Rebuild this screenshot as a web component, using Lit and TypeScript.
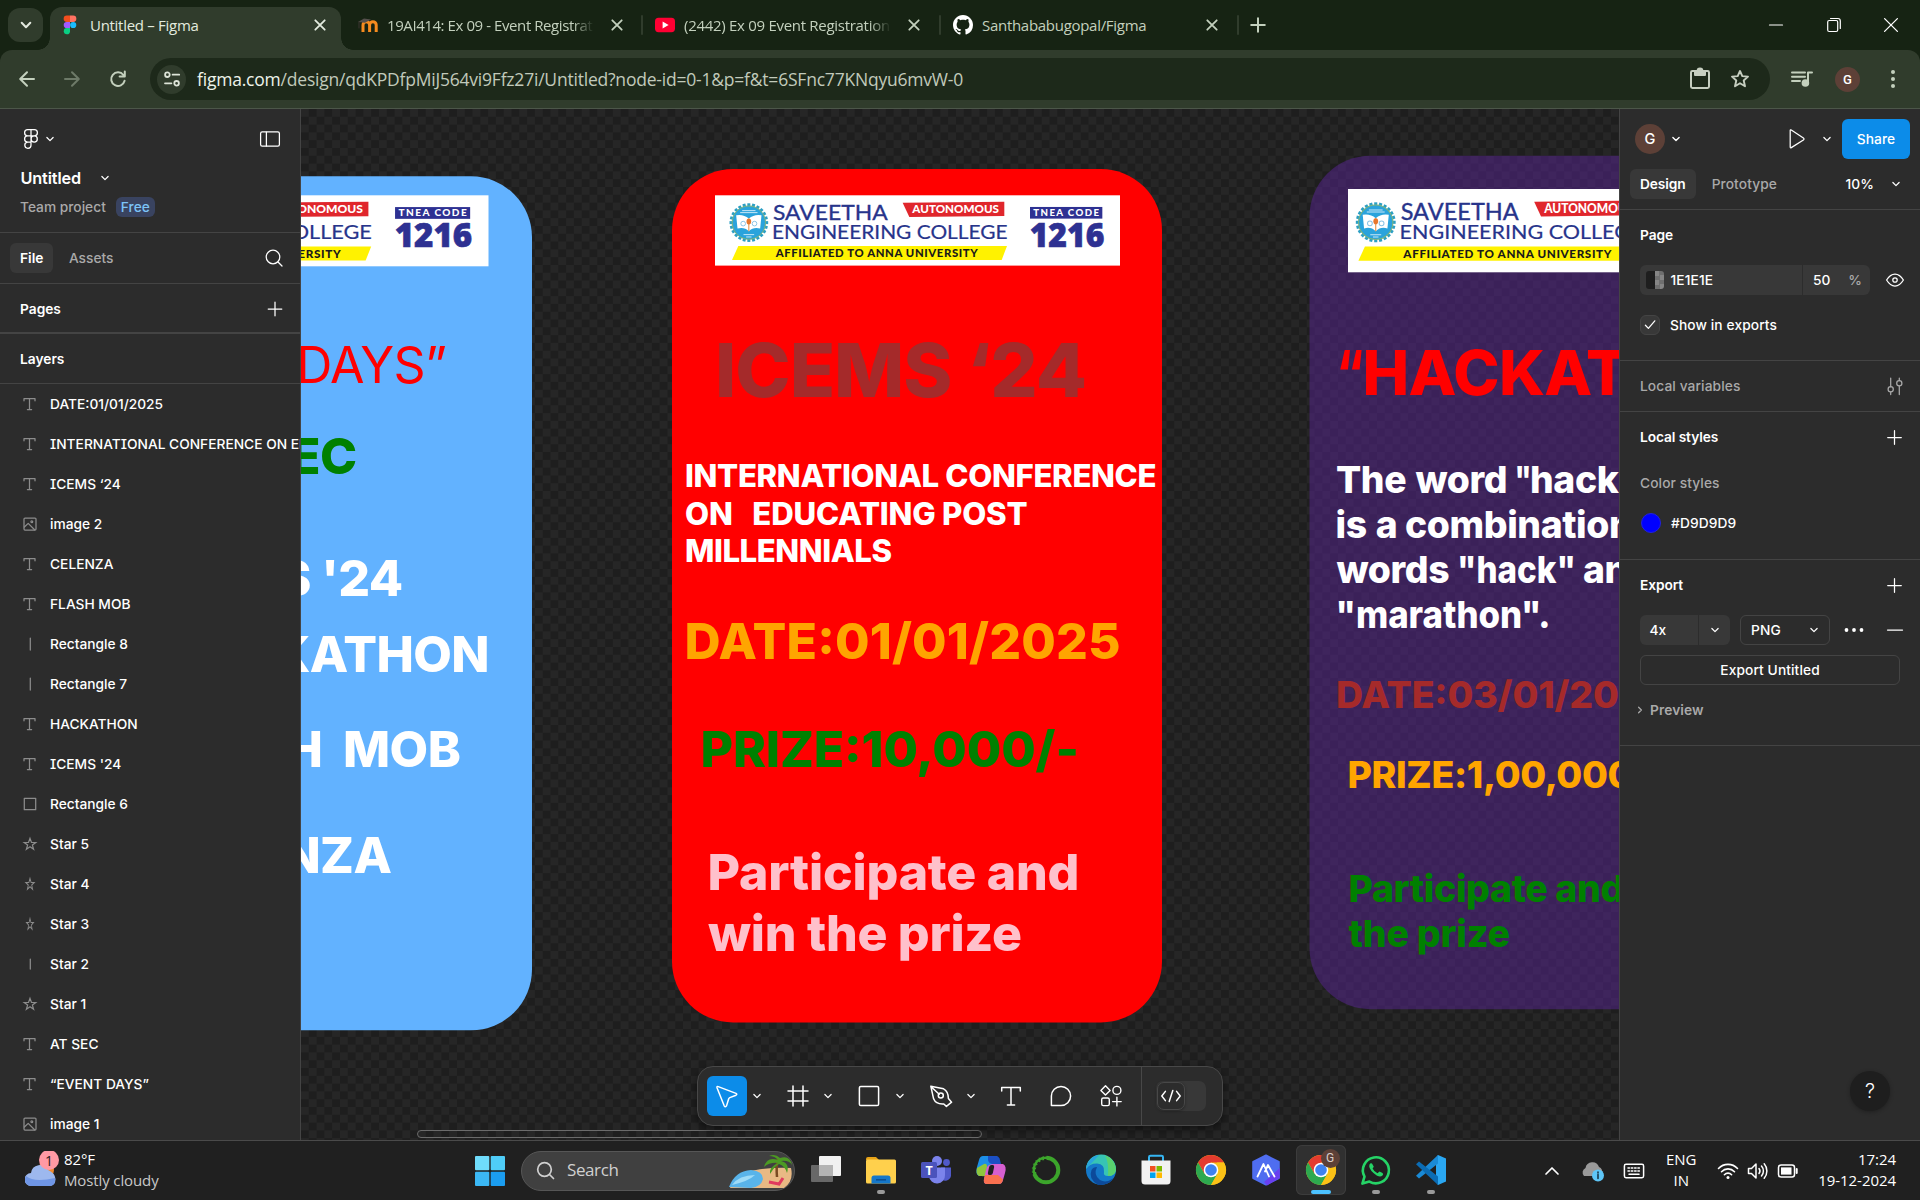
import { LitElement, html, svg, css, type SVGTemplateResult } from "lit";
import { customElement, property } from "lit/decorators.js";

type Layer = { kind: string; name: string };

const layers: Layer[] = [
  { kind: "text", name: "DATE:01/01/2025" },
  { kind: "text", name: "INTERNATIONAL CONFERENCE ON EDUCATING POST MILLENNIALS" },
  { kind: "text", name: "ICEMS ‘24" },
  { kind: "image", name: "image 2" },
  { kind: "text", name: "CELENZA" },
  { kind: "text", name: "FLASH MOB" },
  { kind: "line", name: "Rectangle 8" },
  { kind: "line", name: "Rectangle 7" },
  { kind: "text", name: "HACKATHON" },
  { kind: "text", name: "ICEMS '24" },
  { kind: "rect", name: "Rectangle 6" },
  { kind: "star", name: "Star 5" },
  { kind: "starSlim", name: "Star 4" },
  { kind: "starThin", name: "Star 3" },
  { kind: "lineShort", name: "Star 2" },
  { kind: "star", name: "Star 1" },
  { kind: "text", name: "AT SEC" },
  { kind: "text", name: "“EVENT DAYS”" },
  { kind: "image", name: "image 1" },
];

/* Every glyph is drawn centred on the origin, in CSS pixels. */
const chromeBall = svg`
  <circle r="15" fill="#fbc116"/>
  <path d="M-13 -7.5A15 15 0 0 1 13 -7.5L0 -7.5L-6.5 3.7Z" fill="#e33b2e"/>
  <path d="M-13 -7.5A15 15 0 0 0 0 15L6.5 3.7L-6.5 3.7Z" fill="#2da94f"/>
  <path d="M13 -7.5A15 15 0 0 1 0 15L6.5 3.7L6 -7.5Z" fill="#fbc116"/>
  <circle r="7.3" fill="#fff"/><circle r="5.8" fill="#3f82f0"/>`;

const star = (sx: number) => svg`<path transform="scale(${sx} 1)" d="M0 -5.6L1.5 -1.6L5.8 -1.5L2.4 1.1L3.6 5.2L0 2.8L-3.6 5.2L-2.4 1.1L-5.8 -1.5L-1.5 -1.6Z" stroke-linejoin="miter"/>`;

const glyphs: Record<string, SVGTemplateResult> = {
  chevron: svg`<path d="M-3.1 -1.5L0 1.6L3.1 -1.5"/>`,
  plus: svg`<path d="M-6.8 0H6.8M0 -6.8V6.8"/>`,
  minus: svg`<path d="M-7.5 0H7.5"/>`,
  close: svg`<path d="M-4.7 -4.7L4.7 4.7M4.7 -4.7L-4.7 4.7"/>`,
  text: svg`<path d="M-6 -3.2V-5.5H5V-3.2M-.5 -5.5V5.5M-2.6 5.5H1.6"/>`,
  image: svg`<rect x="-6" y="-6" width="12" height="12" rx="1"/><circle cx="1.8" cy="-2.3" r=".9"/><path d="M-5.6 3L-1.8 -.6L4.6 5.8"/>`,
  line: svg`<path d="M.3 -6V6"/>`,
  lineShort: svg`<path d="M.3 -5V5"/>`,
  rect: svg`<rect x="-5.7" y="-5.7" width="11.4" height="11.4"/>`,
  star: star(1),
  starSlim: star(0.72),
  starThin: star(0.6),
  figma: svg`<path d="M0 -9.3H-3.3A3.1 3.1 0 0 0 -3.3 -3.1H0ZM0 -9.3H3.3A3.1 3.1 0 0 1 3.3 -3.1H0ZM0 -3.1H-3.3A3.1 3.1 0 0 0 -3.3 3.1H0ZM3.2 -3.1A3.1 3.1 0 1 1 3.2 3.1A3.1 3.1 0 1 1 3.2 -3.1M0 3.1H-3.3A3.1 3.1 0 1 0 0 6.2Z"/>`,
  panel: svg`<rect x="-9.4" y="-7.1" width="18.8" height="14.2" rx="1.6"/><path d="M-3.6 -7V7"/>`,
  search: svg`<circle cx="-1" cy="-1" r="6.8"/><path d="M4 4L8 8"/>`,
  play: svg`<path d="M-6.8 -8.4Q-6.8 -9.6 -5.7 -9L6.4 -1Q7.6 0 6.4 1L-5.7 8.6Q-6.8 9.2 -6.8 8Z"/>`,
  eye: svg`<path d="M-8.4 0Q-4.8 -6 0 -6T8.4 0Q4.8 6 0 6T-8.4 0Z"/><circle r="2.2"/>`,
  check: svg`<path d="M-4.6 .2L-1.6 3.4L4.8 -4.2"/>`,
  sliders: svg`<path d="M-4.3 -8V.8M-4.3 6V8.5M4.3 8.5V0M4.3 -5.5V-8"/><circle cx="-4.3" cy="3.3" r="2.6"/><circle cx="4.3" cy="-2.8" r="2.6"/>`,
  dots: svg`<g fill="currentColor" stroke="none"><circle cx="-7.5" r="1.9"/><circle r="1.9"/><circle cx="7.5" r="1.9"/></g>`,
  cursor: svg`<path d="M-10 -8.3Q-10.3 -9.8 -8.8 -9.4L9 -2.6Q10.6 -1.6 9 -.8L2.8 1.6Q2 2 1.7 2.8L-.4 9.6Q-1.6 11.6 -2.8 9.8Z"/>`,
  frame: svg`<path d="M-5 -10V10M5 -10V10M-10 -5H10M-10 5H10"/>`,
  square: svg`<rect x="-9.6" y="-9.6" width="19.2" height="19.2" rx="1.4"/>`,
  pen: svg`<path d="M-10.2 -9.8L2.6 -7.2Q7.4 -4.6 7.4 2.4L10.6 6.2L5.4 10.4L2.8 8Q-5 8.6 -7.4 2.8ZM-9.6 -9L-1.8 -1.8"/><circle cx="-.2" cy="-.4" r="2.5"/>`,
  type: svg`<path d="M-9.3 -5V-8.6H9.3V-5M0 -8.6V9M-3.6 9H3.6"/>`,
  bubble: svg`<path d="M-9.6 9.6V0A9.6 9.6 0 1 1 0 9.6Z"/>`,
  components: svg`<path d="M-5.5 -10.2L-.9 -5.6L-5.5 -1L-10.1 -5.6ZM1.6 5.6H10.2M5.9 1.3V9.9"/><circle cx="5.9" cy="-5.6" r="4"/><rect x="-9.3" y="2" width="7.6" height="7.6" rx="1.6"/>`,
  code: svg`<path d="M-5.6 -4.6L-9.2 0L-5.6 4.6M5.6 -4.6L9.2 0L5.6 4.6M1.8 -5.6L-1.8 5.6"/>`,
  chevronRight: svg`<path d="M-1.4 -2.8L1.4 0L-1.4 2.8"/>`,
  tabChevron: svg`<path d="M-4.3 -2.2L0 2.2L4.3 -2.2"/>`,
  back: svg`<path d="M7 0H-6.4M0 -6.8L-6.8 0L0 6.8"/>`,
  forward: svg`<path d="M-7 0H6.4M0 -6.8L6.8 0L0 6.8"/>`,
  reload: svg`<path d="M5.4 -4A6.8 6.8 0 1 0 6.6 1.8M6.8 -7.4V-2.4H1.6"/>`,
  tune: svg`<circle cx="-4.6" cy="-4.3" r="2.3"/><path d="M.6 -4.3H7.2M-7 4.3H-.6"/><circle cx="4.6" cy="4.3" r="2.3"/>`,
  clipboard: svg`<rect x="-9" y="-8" width="18" height="17" rx="1.4"/><path d="M-5 -8V-4H5V-8H2.4A2.4 2.4 0 0 0 -2.4 -8Z" fill="currentColor"/>`,
  bookmark: svg`<path d="M0 -8L2.3 -2.9L8 -2.4L3.7 1.5L5 7.2L0 4.2L-5 7.2L-3.7 1.5L-8 -2.4L-2.3 -2.9Z"/>`,
  music: svg`<path d="M-10 -6.5H3M-10 -2.3H3M-10 2H-2M10 -6.5H6V4"/><circle cx="3.4" cy="4" r="2.8" fill="currentColor"/>`,
  kebab: svg`<g fill="currentColor" stroke="none"><circle cy="-7" r="2"/><circle r="2"/><circle cy="7" r="2"/></g>`,
  winMin: svg`<path d="M-6.5 0H6.5"/>`,
  winRestore: svg`<rect x="-6.3" y="-4.5" width="10" height="11" rx="1.5"/><path d="M-3.5 -6.5H4Q6.3 -6.5 6.3 -4V3.5"/>`,
  winClose: svg`<path d="M-6.4 -6.4L6.4 6.4M6.4 -6.4L-6.4 6.4"/>`,
  figmaColor: svg`<g stroke="none"><path d="M0 -9.4H-3.2A3.1 3.1 0 0 0 -3.2 -3.1H0Z" fill="#f24e1e"/><path d="M0 -9.4H3.2A3.1 3.1 0 0 1 3.2 -3.1H0Z" fill="#ff7262"/><path d="M0 -3.1H-3.2A3.1 3.1 0 0 0 -3.2 3.1H0Z" fill="#a259ff"/><circle cx="3.2" r="3.1" fill="#1abcfe"/><path d="M0 3.1H-3.2A3.1 3.1 0 1 0 0 6.2Z" fill="#0acf83"/></g>`,
  moodle: svg`<path d="M-5 7V0A3.3 3.3 0 0 1 1.6 0V7M1.6 0A3.3 3.3 0 0 1 8.2 0V7" stroke="#f68b1f" stroke-width="3" stroke-linecap="butt"/><path d="M-10 -3L-4 -6.6L3 -5.6L-3 -2.2Z" fill="#55504c" stroke="none"/><path d="M-9 -3V3" stroke="#3b3530" stroke-width="1"/>`,
  youtube: svg`<rect x="-10" y="-7.2" width="20" height="14.4" rx="3.6" fill="#ff0033" stroke="none"/><path d="M-2.4 -3.4L3.6 0L-2.4 3.4Z" fill="#fff" stroke="none"/>`,
  github: svg`<path transform="translate(-10 -10) scale(1.25)" fill="#fff" stroke="none" d="M8 0C3.58 0 0 3.58 0 8c0 3.54 2.29 6.53 5.47 7.59.4.07.55-.17.55-.38 0-.19-.01-.82-.01-1.49-2.01.37-2.53-.49-2.69-.94-.09-.23-.48-.94-.82-1.13-.28-.15-.68-.52-.01-.53.63-.01 1.08.58 1.23.82.72 1.21 1.87.87 2.33.66.07-.52.28-.87.51-1.07-1.78-.2-3.64-.89-3.64-3.95 0-.87.31-1.59.82-2.15-.08-.2-.36-1.02.08-2.12 0 0 .67-.21 2.2.82.64-.18 1.32-.27 2-.27s1.36.09 2 .27c1.53-1.04 2.2-.82 2.2-.82.44 1.1.16 1.92.08 2.12.51.56.82 1.27.82 2.15 0 3.07-1.87 3.75-3.65 3.95.29.25.54.73.54 1.48 0 1.07-.01 1.93-.01 2.2 0 .21.15.46.55.38A8.01 8.01 0 0 0 16 8c0-4.42-3.58-8-8-8z"/>`,
  windows: svg`<g stroke="none"><rect x="-15" y="-15" width="14.3" height="14.3" rx="1" fill="#6fdcfb"/><rect x=".7" y="-15" width="14.3" height="14.3" rx="1" fill="#4fcdf8"/><rect x="-15" y=".7" width="14.3" height="14.3" rx="1" fill="#3bb8f5"/><rect x=".7" y=".7" width="14.3" height="14.3" rx="1" fill="#1b9df0"/></g>`,
  taskview: svg`<g stroke="none"><rect x="-15" y="-5" width="22" height="17" rx="1" fill="#686868"/><rect x="-7" y="-14" width="22" height="20" rx="1" fill="#f1f1f1"/><rect x="-7" y="-5" width="14" height="11" fill="#b4b4b4"/></g>`,
  explorer: svg`<g stroke="none"><path d="M-15 -11Q-15 -13 -13 -13H-5L-2 -10H-15Z" fill="#e8a317"/><rect x="-15" y="-10.5" width="30" height="24" rx="1.5" fill="#ffd04c"/><path d="M-9.5 13.5V8Q-9.5 5.5 -7 5.5H7Q9.5 5.5 9.5 8V13.5Z" fill="#1577c9"/><rect x="-5" y="9" width="10" height="1.6" fill="#0b4f93"/></g>`,
  teams: svg`<g stroke="none"><circle cx="1" cy="-9" r="5" fill="#7b83eb"/><circle cx="10.5" cy="-7.5" r="3.4" fill="#5059c9"/><path d="M5 -2.5H15V6A6 6 0 0 1 5 9Z" fill="#5059c9"/><path d="M-7 -2.5H9V5A8 8 0 0 1 -7 6Z" fill="#7b83eb"/><rect x="-15" y="-8" width="16" height="16" rx="1.5" fill="#4b53bc"/></g><text x="-7" y="4.6" text-anchor="middle" font-size="12.5" font-weight="700" fill="#fff" stroke="none">T</text>`,
  copilot: svg`<g stroke="none"><path d="M-8 -14H4Q8 -14 7 -9L5 0Q4 6 -2 6H-12Q-16 4 -14 -3L-12 -10Q-11 -14 -8 -14Z" fill="#1c8fe8"/><path d="M-14 -2L-7 -6Q-4 -7 -4 -3L-5 4Q-6 7 -9 6H-12Q-15.5 4 -14 -2Z" fill="#8fc63d"/><path d="M8 14H-4Q-8 14 -7 9L-5 0Q-4 -6 2 -6H12Q16 -4 14 3L12 10Q11 14 8 14Z" fill="#d65fd0"/><path d="M8 14H-4Q-8 14 -7 9L-6 5H7L12 9.5Q11 14 8 14Z" fill="#f9704f"/><path d="M-3 -14H5Q8 -14 9 -10L10 -6H2Q-2 -6 -3 -10Z" fill="#1b4fc4"/><rect x="-2.5" y="-5" width="5" height="10" rx="2" transform="skewX(-12)" fill="#202020"/></g>`,
  wreath: svg`<circle r="12.3" stroke="#3ca52b" stroke-width="4"/><path d="M0 -14.2A14.2 14.2 0 0 0 -13.6 4" stroke="#202020" stroke-width="1.5" stroke-dasharray="2 2.2"/><path d="M0 -10.5A10.5 10.5 0 0 0 -10 3" stroke="#202020" stroke-width="1.2" stroke-dasharray="1.5 2.5"/>`,
  edge: svg`<g stroke="none"><circle r="15" fill="#1478c8"/><path d="M-15 -1A15 15 0 0 1 15 0Q14 6 7 6Q2 6 3 2Q4 -6 -4 -6.5Q-12 -6.5 -15 -1Z" fill="#37c4b4"/><path d="M-15 -1A15 15 0 0 1 -2 -14.9Q-8 -8 -15 -1Z" fill="#2aa5dd"/><path d="M4 -14.5A15 15 0 0 1 15 0Q14 6 7 6Q8 -8 4 -14.5Z" fill="#59d26e"/><path d="M-4 -3Q-8 5 -1 10Q5 13.5 12.5 8.3A15 15 0 0 1 -3 14.7Q-13 9 -9.5 0Q-8 -3 -4 -3Z" fill="#0c4a9a"/></g>`,
  store: svg`<path d="M-7 -9V-13Q-7 -14.2 -5.5 -14.2H5.5Q7 -14.2 7 -13V-9" stroke="#35b5f2" stroke-width="2"/><path d="M-14.5 -9.5H14.5V11Q14.5 14.5 11 14.5H-11Q-14.5 14.5 -14.5 11Z" fill="#f2f2f2" stroke="none"/><g stroke="none"><rect x="-6" y="-4" width="5.5" height="5.5" fill="#f25022"/><rect x=".5" y="-4" width="5.5" height="5.5" fill="#7fba00"/><rect x="-6" y="2.5" width="5.5" height="5.5" fill="#00a4ef"/><rect x=".5" y="2.5" width="5.5" height="5.5" fill="#ffb900"/></g>`,
  chrome: svg`<g stroke="none">${chromeBall}</g>`,
  hexApp: svg`<path d="M0 -14.5L12.8 -8V8L0 14.5L-12.8 8V-8Z" fill="#4f6df0" stroke="#4f6df0" stroke-width="2"/><path d="M1 15.5L13.8 8V-2L-2 12Z" fill="#6a3ff0" stroke="none"/><path d="M-8.5 6.5L-2.5 -6L3 6.5M-1 1.5L2 -5L8.5 6.5" stroke="#fff" stroke-width="1.8"/>`,
  whatsapp: svg`<path d="M-13.6 13.6L-11.5 6.6A13 13 0 1 1 -6.6 11.6Z" fill="#202020" stroke="#25d366" stroke-width="2.6"/><path d="M-4 -6.5Q-5.5 -7.5 -6.5 -5.5Q-8 -2 -2.5 3Q3.5 8.5 6.5 5.5Q7.8 4 6.5 3L3.5 1.5L1.5 3.3Q-2 1.5 -3.4 -1.6L-2.2 -3.2Z" fill="#25d366" stroke="none"/>`,
  vscode: svg`<g stroke="none"><path d="M7 -15L15 -11.5V11.5L7 15L5 12V-12Z" fill="#2aa7f2"/><path d="M7 -15V-6.5L-12 8.5L-15 5.8Z" fill="#1a8ad6"/><path d="M7 15V6.5L-12 -8.5L-15 -5.8Z" fill="#0b6cb4"/></g>`,
  trayUp: svg`<path d="M-6 3L0 -3L6 3"/>`,
  cloud: svg`<path d="M-9 5A5 5 0 0 1 -7.5 -3A7 7 0 0 1 6 -4Q10 -3 9.5 5Z" fill="#9a9a9a" stroke="none"/><circle cx="5" cy="4.5" r="6" fill="#5ec6f7" stroke="none"/><path d="M5 3.5V7.5M5 1V2" stroke="#17384a" stroke-width="1.6"/>`,
  keyboard: svg`<rect x="-9.6" y="-6.7" width="19.2" height="13.4" rx="1.6"/><path d="M-6 -3H6.5M-6 0H6.5" stroke-dasharray="1.5 1.8"/><path d="M-5 3.3H5"/>`,
  wifi: svg`<path d="M-9.5 -2.5A13 13 0 0 1 9.5 -2.5M-6.5 .7A9 9 0 0 1 6.5 .7M-3.6 3.7A5 5 0 0 1 3.6 3.7"/><circle cy="6.5" r="1.5" fill="currentColor" stroke="none"/>`,
  volume: svg`<path d="M-9.5 -2.5H-6.5L-2 -7V7L-6.5 2.5H-9.5ZM1 -2.5A4 4 0 0 1 1 2.5M3.5 -5A7.5 7.5 0 0 1 3.5 5M6.2 -7.2A11 11 0 0 1 6.2 7.2"/>`,
  battery: svg`<rect x="-9.5" y="-6" width="16" height="12" rx="2.5"/><rect x="-7" y="-3.6" width="10.5" height="7.2" fill="currentColor" stroke="none"/><path d="M8.7 -2V2" stroke-width="2"/>`,
};

@customElement("ui-icon")
export class UiIcon extends LitElement {
  @property() name = "";
  @property({ type: Number }) size = 20;
  @property({ type: Number }) weight = 1.25;
  static styles = css`
    :host { display: inline-flex; flex: none; justify-content: center; align-items: center; }
    svg { display: block; overflow: visible; fill: none; stroke: currentColor; stroke-linecap: round; stroke-linejoin: round; font-family: "Open Sans", sans-serif; }
  `;
  render() {
    const s = this.size;
    return html`<svg width=${s} height=${s} viewBox="${-s / 2} ${-s / 2} ${s} ${s}" stroke-width=${this.weight}>${glyphs[this.name]}</svg>`;
  }
}

const chromeFont = css`
  .seg { font-family: "Open Sans", "Noto Sans", sans-serif; font-stretch: 92%; }
`;

@customElement("browser-chrome")
export class BrowserChrome extends LitElement {
  static styles = [chromeFont, css`
    :host { display: block; height: 109px; background: #162313; color: #c3d0bd; }
    .strip { display: flex; height: 50px; align-items: center; padding-left: 8px; box-sizing: border-box; }
    .finder { width: 35px; height: 34px; border-radius: 12px; background: #303c2c; display: flex; align-items: center; justify-content: center; margin-right: 7px; color: #e3e9df; }
    .tab { display: flex; align-items: center; height: 43px; box-sizing: border-box; font-size: 15px; letter-spacing: -.29px; }
    .strip > .tab { align-self: flex-end; padding-bottom: 7px; }
    .active { width: 291px; background: #303c2c; border-radius: 12px 12px 0 0; padding-left: 10px; color: #e3ebdf; position: relative; }
    .active::before, .active::after { content: ""; position: absolute; bottom: 0; width: 12px; height: 12px; }
    .active::before { left: -12px; background: radial-gradient(circle at 0 0, transparent 11.5px, #303c2c 12px); }
    .active::after { right: -12px; background: radial-gradient(circle at 100% 0, transparent 11.5px, #303c2c 12px); }
    .idle { width: 296px; padding-left: 12px; }
    .first { width: 300px; padding-left: 17px; }
    .first .title { letter-spacing: -.42px; }
    .title { flex: none; width: 211px; margin-left: 9px; white-space: nowrap; overflow: hidden; line-height: 24px; }
    .active .title { margin-left: 10px; width: 222px; }
    .fade { -webkit-mask-image: linear-gradient(90deg, #000 88%, transparent 98%); mask-image: linear-gradient(90deg, #000 88%, transparent 98%); }
    .tab .x { margin-left: 2px; }
    .active .x { margin-left: -2px; }
    .sep { width: 2px; height: 20px; background: #303c2c; border-radius: 1px; flex: none; }
    .new { margin-left: 9px; }
    .wins { display: flex; margin-left: auto; color: #fff; }
    .wins ui-icon { width: 57.5px; }
    .bar { height: 59px; background: #303c2c; border-radius: 12px 12px 0 0; box-sizing: border-box; border-bottom: 1px solid #4c5649; display: flex; align-items: center; padding: 0 4px; }
    .bar > ui-icon { width: 45.5px; }
    .bar > .queue { width: 64px; }
    .off { color: #6d7a68; }
    .omni { flex: none; width: 1620px; height: 42px; border-radius: 21px; background: #1d291a; display: flex; align-items: center; margin-left: 9.5px; box-sizing: border-box; padding-left: 7px; }
    .info { width: 29px; height: 29px; border-radius: 50%; background: #303c2c; display: flex; justify-content: center; align-items: center; color: #dde4d8; }
    .url { margin-left: 11px; font-size: 17.5px; color: #c1cabb; white-space: nowrap; line-height: 28px; flex: 1; letter-spacing: -.21px; }
    .url b { font-weight: 400; color: #eef3ea; }
    .clip { margin-right: 20px; color: #c6cec0; }
    .book { margin-right: 20px; color: #c6cec0; }
    .ava { flex: none; width: 25px; height: 25px; border-radius: 50%; background: #5d4037; color: #fff; font: 500 13px/25px Roboto, sans-serif; text-align: center; margin: 0 10px 0 1px; }
  `];
  render() {
    return html`
      <div class="strip seg">
        <div class="finder"><ui-icon name="tabChevron" size="16" weight="2"></ui-icon></div>
        <div class="tab active"><ui-icon name="figmaColor" size="20"></ui-icon><span class="title">Untitled – Figma</span><ui-icon class="x" name="close" size="20" weight="1.8"></ui-icon></div>
        <div class="tab first"><ui-icon name="moodle" size="20"></ui-icon><span class="title fade">19AI414: Ex 09 - Event Registration</span><ui-icon class="x" name="close" size="34" weight="1.8"></ui-icon></div>
        <span class="sep"></span>
        <div class="tab idle"><ui-icon name="youtube" size="20"></ui-icon><span class="title fade">(2442) Ex 09 Event Registration</span><ui-icon class="x" name="close" size="34" weight="1.8"></ui-icon></div>
        <span class="sep"></span>
        <div class="tab idle"><ui-icon name="github" size="20"></ui-icon><span class="title">Santhababugopal/Figma</span><ui-icon class="x" name="close" size="34" weight="1.8"></ui-icon></div>
        <span class="sep"></span>
        <ui-icon class="new" name="plus" size="20" weight="2"></ui-icon>
        <div class="wins"><ui-icon name="winMin" weight="1.2"></ui-icon><ui-icon name="winRestore" weight="1.2"></ui-icon><ui-icon name="winClose" weight="1.3"></ui-icon></div>
      </div>
      <div class="bar">
        <ui-icon name="back" weight="2"></ui-icon>
        <ui-icon class="off" name="forward" weight="2"></ui-icon>
        <ui-icon name="reload" weight="2"></ui-icon>
        <div class="omni">
          <div class="info"><ui-icon name="tune" weight="1.8" size="18"></ui-icon></div>
          <div class="url seg"><b>figma.com</b>/design/qdKPDfpMiJ564vi9Ffz27i/Untitled?node-id=0-1&amp;p=f&amp;t=6SFnc77KNqyu6mvW-0</div>
          <ui-icon class="clip" name="clipboard" weight="2"></ui-icon>
          <ui-icon class="book" name="bookmark" weight="1.9"></ui-icon>
        </div>
        <ui-icon class="queue" name="music" weight="2"></ui-icon>
        <div class="ava">G</div>
        <ui-icon name="kebab"></ui-icon>
      </div>`;
  }
}

@customElement("layers-panel")
export class LayersPanel extends LitElement {
  static styles = css`
    :host { display: block; width: 301px; height: 1032px; box-sizing: border-box; background: #2c2c2c; border-right: 1px solid #444; color: #fff; font: 500 13.75px/20px Inter, sans-serif; overflow: hidden; }
    .top { height: 58px; padding: 2px 19px 0; box-sizing: border-box; display: flex; align-items: center; }
    .top .toggle { margin-left: auto; }
    .title { display: flex; align-items: center; height: 22px; padding-left: 20.5px; font-size: 16.25px; font-weight: 600; letter-spacing: -.15px; gap: 14px; }
    .project { display: flex; align-items: center; height: 35px; padding-left: 20px; gap: 10px; color: #a9a9a9; font-weight: 450; }
    .free { color: #7cc4f8; background: #394360; border-radius: 6px; padding: 0 5px; height: 20px; }
    .tabs { height: 50px; border-top: 1px solid #444; border-bottom: 1px solid #444; display: flex; align-items: center; padding: 0 16px 0 10px; margin-top: 8px; }
    .tab { background: #383838; border-radius: 6px; height: 30px; line-height: 30px; padding: 0 10px; font-weight: 600; }
    .assets { margin-left: 15.5px; color: #a9a9a9; }
    .tabs ui-icon { margin-left: auto; }
    .head { height: 49px; display: flex; align-items: center; justify-content: space-between; padding: 0 15.5px 0 20px; font-weight: 600; border-bottom: 1px solid #444; }
    .pages { border-bottom-width: 2px; padding-top: 1px; box-sizing: border-box; height: 50px; }
    .row { height: 40px; display: flex; align-items: center; white-space: nowrap; gap: 10px; padding-left: 20px; font-weight: 450; font-feature-settings: "cv08"; }
    .row ui-icon { color: #8c8c8c; }
  `;
  render() {
    return html`
      <div class="top"><ui-icon name="figma" size="24"></ui-icon><ui-icon name="chevron" size="14"></ui-icon><ui-icon class="toggle" name="panel" size="22"></ui-icon></div>
      <div class="title">Untitled <ui-icon name="chevron" size="20"></ui-icon></div>
      <div class="project">Team project <span class="free">Free</span></div>
      <div class="tabs"><span class="tab">File</span><span class="assets">Assets</span><ui-icon name="search" size="20"></ui-icon></div>
      <div class="head pages">Pages<ui-icon name="plus" size="20"></ui-icon></div>
      <div class="head">Layers</div>
      ${layers.map((l) => html`<div class="row"><ui-icon name=${l.kind} size="20"></ui-icon><span>${l.name}</span></div>`)}`;
  }
}

@customElement("design-panel")
export class DesignPanel extends LitElement {
  static styles = css`
    :host { display: block; width: 301px; height: 1032px; box-sizing: border-box; background: #2c2c2c; border-left: 1px solid #444; color: #fff; font: 500 13.75px/20px Inter, sans-serif; position: relative; letter-spacing: .1px; }
    .user { height: 60px; display: flex; align-items: center; padding: 0 10px 0 15px; }
    .ava { width: 30px; height: 30px; border-radius: 50%; background: #5d4037; text-align: center; line-height: 30px; font-size: 14.5px; }
    .user .play { margin-left: auto; margin-right: 11px; }
    .share { margin-left: 6px; width: 68px; height: 40px; border-radius: 6px; background: #0c8ce9; line-height: 40px; text-align: center; }
    .tabs { height: 41px; box-sizing: border-box; border-bottom: 1px solid #444; display: flex; align-items: flex-start; padding: 0 14px 0 10px; line-height: 30px; }
    .tabs ui-icon { height: 30px; }
    .tab { background: #383838; border-radius: 6px; padding: 0 10px; font-weight: 600; letter-spacing: -.1px; }
    .proto { margin-left: 16px; color: #a9a9a9; font-weight: 450; }
    .zoom { margin-left: auto; margin-right: 12px; }
    section { border-bottom: 1px solid #444; box-sizing: border-box; padding: 0 15px 0 20px; }
    .line { display: flex; align-items: center; justify-content: space-between; height: 50px; font-weight: 600; letter-spacing: -.1px; }
    .muted { color: #a9a9a9; font-weight: 450; letter-spacing: .1px; }
    .sub { height: 41px; }
    .page { height: 151px; }
    .fill { display: flex; height: 30px; margin-top: 5px; align-items: center; }
    .box { display: flex; flex: none; height: 30px; border-radius: 6px; background: #383838; overflow: hidden; align-items: center; }
    .hex { width: 163px; height: 30px; display: flex; align-items: center; padding-left: 6px; gap: 7px; border-right: 1px solid #2c2c2c; box-sizing: border-box; }
    .chip { width: 17.5px; height: 17.5px; border-radius: 3px; background: linear-gradient(90deg, #1e1e1e 50%, transparent 50%), repeating-conic-gradient(#6f6f6f 0 25%, #858585 0 50%) 0 0 / 9px 9px; }
    .pct { width: 67px; display: flex; justify-content: space-between; padding: 0 8px 0 10px; box-sizing: border-box; }
    .pct i { font-style: normal; color: #a9a9a9; }
    .fill ui-icon { margin-left: 15px; }
    .check { display: flex; margin-top: 20px; align-items: center; gap: 10px; }
    .tick { width: 18px; height: 18px; border: 1px solid #444; border-radius: 6px; background: #383838; display: flex; justify-content: center; align-items: center; }
    .vars { height: 51px; }
    .styles { height: 148px; }
    .swatchrow { display: flex; align-items: center; gap: 10px; height: 20px; margin-top: 10px; padding-left: 1px; }
    .dot { width: 18px; height: 18px; border-radius: 50%; background: #00f; border: 1px solid #2222dd; }
    .export { height: 186px; }
    .opts { display: flex; align-items: center; margin-top: 5px; height: 30px; }
    .scale { width: 59px; padding-left: 9.5px; border-right: 1px solid #2c2c2c; height: 30px; line-height: 30px; box-sizing: border-box; }
    .drop { width: 31px; justify-content: center; display: flex; }
    .png { flex: none; width: 90px; height: 30px; border: 1px solid #444; border-radius: 6px; margin-left: 10px; box-sizing: border-box; display: flex; align-items: center; justify-content: space-between; padding: 0 5px 0 10px; }
    .opts .more { margin-left: 12px; margin-right: 19px; }
    .btn { width: 260px; height: 30px; box-sizing: border-box; border: 1px solid #444; border-radius: 6px; text-align: center; line-height: 28px; margin-top: 10px; }
    .preview { display: flex; align-items: center; gap: 5px; margin: 15px 0 0 -5px; color: #a9a9a9; font-weight: 600; }
    .help { position: absolute; right: 30px; bottom: 30px; width: 40px; height: 40px; border-radius: 50%; background: #1e1e1e; text-align: center; font: 300 20px/40px Inter, sans-serif; box-shadow: 0 1px 4px rgba(0,0,0,.3); }
  `;
  render() {
    return html`
      <div class="user"><div class="ava">G</div><ui-icon name="chevron" size="22" weight="1.4"></ui-icon><ui-icon class="play" name="play" size="20"></ui-icon><ui-icon name="chevron" size="18"></ui-icon><div class="share">Share</div></div>
      <div class="tabs"><span class="tab">Design</span><span class="proto">Prototype</span><span class="zoom">10%</span><ui-icon name="chevron" size="20"></ui-icon></div>
      <section class="page">
        <div class="line">Page</div>
        <div class="fill"><div class="box"><div class="hex"><span class="chip"></span>1E1E1E</div><div class="pct">50<i>%</i></div></div><ui-icon name="eye" size="20"></ui-icon></div>
        <div class="check"><span class="tick"><ui-icon name="check" size="16"></ui-icon></span>Show in exports</div>
      </section>
      <section class="vars"><div class="line muted">Local variables<ui-icon name="sliders" size="20"></ui-icon></div></section>
      <section class="styles">
        <div class="line">Local styles<ui-icon name="plus" size="21"></ui-icon></div>
        <div class="line muted sub">Color styles</div>
        <div class="swatchrow"><span class="dot"></span>#D9D9D9</div>
      </section>
      <section class="export">
        <div class="line">Export<ui-icon name="plus" size="21"></ui-icon></div>
        <div class="opts"><div class="box"><div class="scale">4x</div><div class="drop"><ui-icon name="chevron" size="20"></ui-icon></div></div><div class="png">PNG<ui-icon name="chevron" size="20"></ui-icon></div><ui-icon class="more" name="dots" size="24"></ui-icon><ui-icon name="minus" size="20"></ui-icon></div>
        <div class="btn">Export Untitled</div>
        <div class="preview"><ui-icon name="chevronRight" size="10"></ui-icon><span>Preview</span></div>
      </section>
      <div class="help">?</div>`;
  }
}

/* College banner: 1215 by 211 units, cropped by the viewBox that is passed. */
const banner = (x: number, y: number, w: number, h: number, box: string) => {
  const teeth = Array.from({ length: 24 }, (_, i) => svg`<rect x="-4.5" y="-58" width="9" height="12" fill="#2b9fc4" transform="rotate(${i * 15})"/>`);
  return svg`
  <rect x=${x} y=${y} width=${w} height=${h} fill="#fff"/>
  <svg x=${x} y=${y} width=${w} height=${h} viewBox=${box} preserveAspectRatio="none">
    <g transform="translate(101.5 82)">
      ${teeth}
      <circle r="50" fill="#2aa3dc" stroke="#7fb37a" stroke-width="3"/>
      <path d="M-38 -22Q-16 -26 0 -12Q16 -26 38 -22L34 18Q14 12 0 26Q-14 12 -34 18Z" fill="#fff"/>
      <path d="M0 -12V26" stroke="#e58b3a" stroke-width="3"/>
      <ellipse cy="-3" rx="7" ry="9" fill="#e8762c"/>
      <circle cx="-17" cy="3" r="7" fill="none" stroke="#8cc4e6" stroke-width="3"/><circle cx="17" cy="3" r="7" fill="none" stroke="#8cc4e6" stroke-width="3"/>
      <path d="M-20 -36H20M-26 -30H26M-16 36H16M-8 43H8" stroke="#c9e8f7" stroke-width="3"/>
    </g>
    <g font-family="Lato, sans-serif" font-weight="400" fill="#27348b">
      <text x="174" y="74" font-size="66" textLength="344" lengthAdjust="spacingAndGlyphs" stroke="#27348b" stroke-width="1">SAVEETHA</text>
      <text x="171" y="131" font-size="58" textLength="707" lengthAdjust="spacingAndGlyphs" stroke="#27348b" stroke-width=".6">ENGINEERING COLLEGE</text>
      <path d="M563 22L868 19V62L583 65Z" fill="#e0262c"/>
      <text x="592" y="54" font-size="36" font-weight="900" fill="#fff" textLength="260" lengthAdjust="spacingAndGlyphs">AUTONOMOUS</text>
      <path d="M70 152H876L860 194H51Z" fill="#fff200"/>
      <text x="182" y="185" font-size="34" font-weight="900" fill="#1a1a1a" textLength="606">AFFILIATED TO ANNA UNIVERSITY</text>
      <rect x="945" y="35" width="217" height="35" fill="#2e3192"/>
      <text x="955" y="62" font-size="29" font-weight="900" fill="#fff" textLength="197">TNEA CODE</text>
      <text x="944" y="155" font-size="98" font-weight="800" font-family="Open Sans, Inter, sans-serif" fill="#2e3192" stroke="#2e3192" stroke-width="2" textLength="224" lengthAdjust="spacingAndGlyphs">1216</text>
    </g>
  </svg>`;
};

@customElement("design-canvas")
export class DesignCanvas extends LitElement {
  static styles = css`
    :host { display: block; flex: 1; height: 1032px; position: relative; overflow: hidden; background: repeating-conic-gradient(#1e1e1e 0 25%, #262626 0 50%) 0 0 / 15.6px 15.6px; }
    .art { display: block; font-family: Inter, sans-serif; font-weight: 800; }
    .art text { white-space: pre; }
    .scroll { position: absolute; left: 116px; top: 1021px; width: 563px; height: 6px; border: 1px solid #6b6b6b; border-radius: 4px; }
    .tools { position: absolute; left: 396px; top: 957px; width: 526px; height: 60px; box-sizing: border-box; border: 1px solid #484848; border-radius: 16px; background: #2c2c2c; box-shadow: 0 3px 8px rgba(0,0,0,.5); display: flex; align-items: center; padding-left: 9px; color: #fff; }
    .tools > ui-icon { width: 20px; }
    .move { width: 40px; height: 40px; border-radius: 6px; background: #0c8ce9; display: flex; align-items: center; justify-content: center; flex: none; }
    .near { margin-left: 10.3px; }
    .far { margin-left: 21px; }
    .type { margin-left: 20px; }
    .bubble { margin-left: 30.5px; }
    .parts { margin-left: 29.5px; }
    .mode { margin-left: 20px; height: 58px; border-left: 1px solid #484848; padding-left: 14.5px; display: flex; align-items: center; }
    .track { width: 50px; height: 30px; border-radius: 7px; background: #383838; display: flex; align-items: center; }
    .knob { width: 28px; height: 28px; border: 1px solid #484848; border-radius: 7px; background: #2c2c2c; box-sizing: border-box; margin-left: 1px; display: flex; align-items: center; justify-content: center; box-shadow: 0 1px 3px rgba(0,0,0,.35); }
  `;
  render() {
    const line = (x: number, y: number, size: number, fill: string, s: string, length = 0) => length
      ? svg`<text x=${x} y=${y} font-size=${size} fill=${fill} textLength=${length}>${s}</text>`
      : svg`<text x=${x} y=${y} font-size=${size} fill=${fill} letter-spacing="-.01em">${s}</text>`;
    const squeezed = (x: number, y: number, size: number, fill: string, s: string, length: number) =>
      svg`<text x=${x} y=${y} font-size=${size} fill=${fill} textLength=${length} lengthAdjust="spacingAndGlyphs">${s}</text>`;
    const ending = (x: number, y: number, s: string, fill = "#fff", weight = 800) =>
      svg`<text x=${x} y=${y} font-size="50" fill=${fill} font-weight=${weight} letter-spacing="-.012em" text-anchor="end">${s}</text>`;
    return html`
      <svg class="art" width="1318" height="1032" viewBox="301 109 1318 1032">
        <rect x="42" y="176.3" width="490" height="854" rx="61" fill="#62b2ff"/>
        ${banner(68, 195.3, 420.5, 71, "0 0 1215 211")}
        ${ending(446.5, 383.3, "“EVENT DAYS”", "#ff0000", 400)}
        ${ending(356.5, 474, "AT SEC", "#008000")}
        ${ending(402.7, 595.7, "ICEMS '24")}
        ${ending(489, 672.3, "HACKATHON")}
        ${ending(460.3, 767.3, "FLASH  MOB")}
        ${ending(391.3, 872.5, "CELENZA")}
        <rect x="672" y="169" width="490" height="853.5" rx="61" fill="#ff0000"/>
        ${banner(715, 195.3, 405, 70.3, "0 0 1215 211")}
        ${line(715, 397, 74.5, "#a52a2a", "ICEMS ‘24", 372)}
        ${line(685, 487.3, 31.2, "#fff", "INTERNATIONAL CONFERENCE", 471.5)}
        ${line(685, 524.7, 31.2, "#fff", "ON   EDUCATING POST", 342.5)}
        ${line(685, 562, 31.2, "#fff", "MILLENNIALS", 207)}
        ${line(684.5, 659.3, 50, "#ffa500", "DATE:01/01/2025", 436)}
        ${line(700.5, 767.3, 50, "#008000", "PRIZE:10,000/-", 378.5)}
        ${line(707.5, 890.3, 50, "#ffc0cb", "Participate and", 372)}
        ${line(708, 950.5, 50, "#ffc0cb", "win the prize", 314)}
        <rect x="1309.5" y="155.7" width="490" height="853.5" rx="61" fill="#582494" fill-opacity=".5"/>
        ${banner(1348, 189, 390, 83.3, "20.7 -14.7 1136 242")}
        ${squeezed(1336.5, 395.3, 62.4, "#ff0000", "“", 27)}${line(1362.5, 395.3, 62.4, "#ff0000", "HACKATHON”")}
        ${line(1336, 493, 37.3, "#fff", "The")}${line(1415.5, 493, 37.3, "#fff", "word")}${squeezed(1514.5, 493, 37.3, "#fff", "\"", 17)}${line(1530, 493, 37.3, "#fff", "hackathon\"")}
        ${line(1335.5, 537.7, 37.3, "#fff", "is")}${line(1375.7, 537.7, 37.3, "#fff", "a")}${line(1405, 537.7, 37.3, "#fff", "combination of the")}
        ${line(1336.5, 582.7, 37.3, "#fff", "words")}${squeezed(1457, 582.7, 37.3, "#fff", "\"hack\"", 119)}${line(1583, 582.7, 37.3, "#fff", "and")}
        ${squeezed(1335.5, 627.5, 37.3, "#fff", "\"marathon\".", 215)}
        ${line(1336, 708.3, 37.5, "#a52a2a", "DATE:03/01/2025", 331)}
        ${line(1347.5, 788.3, 37.5, "#ffa500", "PRIZE:1,00,000/-")}
        ${line(1348.5, 901.5, 37.5, "#008000", "Participate and win")}
        ${line(1348.5, 946.5, 37.5, "#008000", "the prize", 161.5)}
      </svg>
      <div class="scroll"></div>
      <div class="tools">
        <span class="move"><ui-icon name="cursor" size="24" weight="1.5"></ui-icon></span><ui-icon name="chevron"></ui-icon>
        <ui-icon class="far" name="frame" weight="1.5"></ui-icon><ui-icon class="near" name="chevron"></ui-icon>
        <ui-icon class="far" name="square" weight="1.5"></ui-icon><ui-icon class="near" name="chevron"></ui-icon>
        <ui-icon class="far" name="pen" weight="1.5"></ui-icon><ui-icon class="near" name="chevron"></ui-icon>
        <ui-icon class="type" name="type" weight="1.5"></ui-icon>
        <ui-icon class="bubble" name="bubble" weight="1.5"></ui-icon>
        <ui-icon class="parts" name="components" weight="1.4"></ui-icon>
        <div class="mode"><div class="track"><div class="knob"><ui-icon name="code" weight="1.5"></ui-icon></div></div></div>
      </div>`;
  }
}

@customElement("task-bar")
export class TaskBar extends LitElement {
  static styles = [chromeFont, css`
    :host { display: block; }
    .bar { display: flex; height: 60px; background: #202020; border-top: 1px solid #4a4a4a; box-sizing: border-box; color: #fff; font-size: 15px; line-height: 20.5px; margin-top: -1px; }
    .weather { box-sizing: border-box; width: 437px; padding-left: 25px; display: flex; align-items: center; gap: 5px; }
    .muted { color: #c8c8c8; }
    .wtext { padding-bottom: 2px; letter-spacing: -.12px; }
    .start { box-sizing: border-box; width: 84px; padding-left: 21px; display: flex; justify-content: center; align-items: center; }
    .pill { align-self: center; width: 274px; height: 40px; box-sizing: border-box; border-radius: 20px; border: 1px solid #565656; background: #404040; display: flex; align-items: center; padding: 0 1px 0 14px; font-size: 17px; color: #d0d0d0; margin-right: 3px; letter-spacing: -.4px; }
    .pill span { margin-left: 12px; flex: 1; }
    .app { width: 55px; display: flex; flex-direction: column; align-items: center; justify-content: flex-start; padding-top: 14px; box-sizing: border-box; }
    .app .run { width: 8px; height: 4px; border-radius: 2px; background: #9a9a9a; margin-top: 5px; }
    .on { background: #303030; box-shadow: inset 0 0 0 1px #3c3c3c; border-radius: 6px; width: 50px; margin: 4px 2.5px 5px; padding-top: 10px; position: relative; }
    .app.on .run { width: 20px; background: #4cc2ff; }
    .badge { position: absolute; left: 25px; top: 4px; width: 19px; height: 19px; border-radius: 50%; background: #5d4037; font: 12px/19px Roboto, sans-serif; text-align: center; color: #d9cdc9; }
    .tray { margin-left: auto; display: flex; align-items: center; padding-right: 24px; }
    .sync { margin: 0 21px; }
    .lang { text-align: center; width: 40px; margin: 0 17px 2px; }
    .sys { display: flex; gap: 10px; margin-right: 20px; }
    .clock { text-align: right; letter-spacing: -.05px; margin-bottom: 2px; }
  `];
  render() {
    const app = (n: string, run = false) => html`<div class="app"><ui-icon name=${n} size="30"></ui-icon>${run ? html`<span class="run"></span>` : ""}</div>`;
    return html`<div class="bar seg">
      <div class="weather">
        <svg width="34" height="40" viewBox="25 1149 34 40">
          <circle cx="46" cy="1168" r="8" fill="#f08a2e"/>
          <path d="M31 1184A6.5 6.5 0 0 1 31 1171A9 9 0 0 1 48 1168Q55 1171 55.5 1177Q55.5 1184 49 1184Z" fill="#9db8ee"/>
          <path d="M31 1184A6.5 6.5 0 0 1 26 1174Q34 1181 55 1176Q56 1184 49 1184Z" fill="#6f96e6"/>
          <circle cx="49" cy="1158" r="10" fill="#ff99a4"/>
          <text x="49" y="1163.5" text-anchor="middle" font-size="14" fill="#2b1a1c">1</text>
        </svg>
        <div class="wtext">82°F<br /><span class="muted">Mostly cloudy</span></div>
      </div>
      <div class="start"><ui-icon name="windows" size="30"></ui-icon></div>
      <div class="pill"><ui-icon name="search" size="19" weight="1.7"></ui-icon><span>Search</span>
        <svg width="66" height="36" viewBox="728 1152 66 36">
          <path d="M731 1187Q737 1171 757 1169Q775 1166 792 1167Q795 1180 785 1187Z" fill="#e9b984"/>
          <path d="M730 1186Q736 1170 752 1169Q764 1170 764 1178Q762 1186 752 1187Z" fill="#59b4ea"/>
          <path d="M733 1184Q740 1174 756 1174Q750 1180 733 1184Z" fill="#9fdcf8"/>
          <path d="M778 1176Q777 1165 779 1157" stroke="#7a4a22" stroke-width="2.5" fill="none"/>
          <path d="M779 1159Q768 1155 765 1166Q771 1161 779 1162Q770 1166 771 1173Q776 1165 780 1163Q786 1165 788 1172Q791 1162 782 1160Q790 1159 793 1164Q791 1154 781 1157Q776 1152 770 1155Q776 1155 779 1159Z" fill="#4c9a23"/>
          <path d="M770 1181L780 1183L784 1177" stroke="#e03a5e" stroke-width="3" fill="none"/>
        </svg>
      </div>
      ${app("taskview")}${app("explorer", true)}${app("teams")}${app("copilot")}${app("wreath")}${app("edge")}${app("store")}${app("chrome")}${app("hexApp")}
      <div class="app on"><ui-icon name="chrome" size="30"></ui-icon><span class="badge">G</span><span class="run"></span></div>
      ${app("whatsapp", true)}${app("vscode", true)}
      <div class="tray">
        <ui-icon name="trayUp" weight="1.7"></ui-icon>
        <ui-icon class="sync" name="cloud"></ui-icon>
        <ui-icon name="keyboard" weight="1.5"></ui-icon>
        <div class="lang">ENG<br />IN</div>
        <div class="sys"><ui-icon name="wifi" weight="1.6"></ui-icon><ui-icon name="volume" weight="1.5"></ui-icon><ui-icon name="battery" weight="1.5"></ui-icon></div>
        <div class="clock">17:24<br />19-12-2024</div>
      </div>
    </div>`;
  }
}

@customElement("app-root")
export class AppRoot extends LitElement {
  static styles = css`
    :host { display: block; width: 1920px; height: 1200px; overflow: hidden; background: #202020; }
    .work { display: flex; height: 1032px; }
    task-bar { position: relative; }
  `;
  render() {
    return html`<browser-chrome></browser-chrome>
      <div class="work"><layers-panel></layers-panel><design-canvas></design-canvas><design-panel></design-panel></div>
      <task-bar></task-bar>`;
  }
}
